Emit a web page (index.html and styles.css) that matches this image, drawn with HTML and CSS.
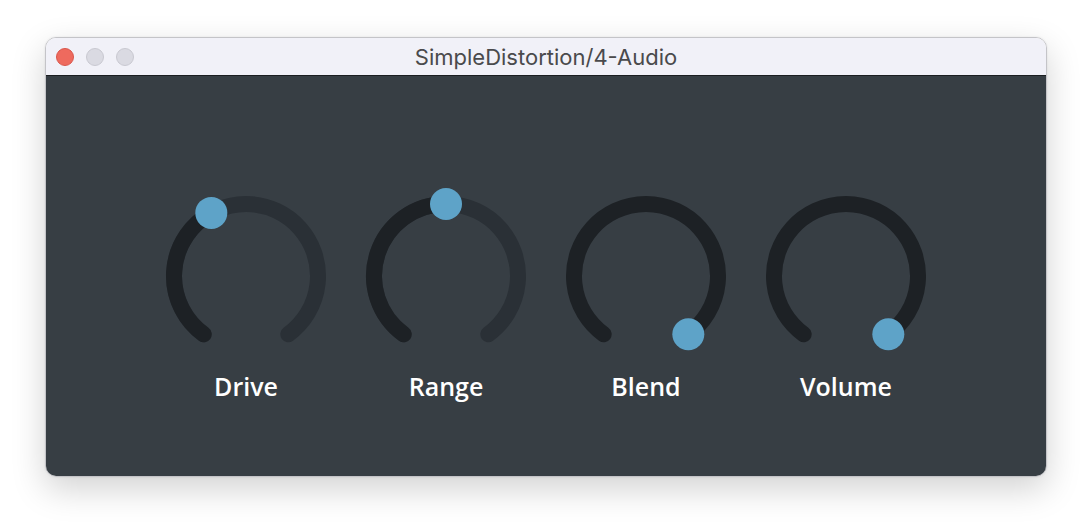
FILE: index.html
```html
<!DOCTYPE html>
<html>
<head>
<meta charset="utf-8">
<link rel="stylesheet" href="styles.css">
</head>
<body>
<div class="window">
  <div class="titlebar">
    <div class="lights">
      <span class="light close"></span>
      <span class="light"></span>
      <span class="light"></span>
    </div>
    <div class="title">SimpleDistortion/4-Audio</div>
  </div>
  <div class="content">
    <div class="knob">
      <svg class="dial" width="200" height="180" viewBox="0 0 200 180">
        <path class="track" d="M 57.68 158.25 A 72 72 0 1 1 142.32 158.25"/>
        <path class="value" d="M 57.68 158.25 A 72 72 0 0 1 65.31 36.91"/>
        <circle class="thumb" cx="65.31" cy="36.91" r="16"/>
      </svg>
      <div class="label">Drive</div>
    </div>
    <div class="knob">
      <svg class="dial" width="200" height="180" viewBox="0 0 200 180">
        <path class="track" d="M 57.68 158.25 A 72 72 0 1 1 142.32 158.25"/>
        <path class="value" d="M 57.68 158.25 A 72 72 0 0 1 100 28"/>
        <circle class="thumb" cx="100" cy="28" r="16"/>
      </svg>
      <div class="label">Range</div>
    </div>
    <div class="knob">
      <svg class="dial" width="200" height="180" viewBox="0 0 200 180">
        <path class="value" d="M 57.68 158.25 A 72 72 0 1 1 142.32 158.25"/>
        <circle class="thumb" cx="142.32" cy="158.25" r="16"/>
      </svg>
      <div class="label">Blend</div>
    </div>
    <div class="knob">
      <svg class="dial" width="200" height="180" viewBox="0 0 200 180">
        <path class="value" d="M 57.68 158.25 A 72 72 0 1 1 142.32 158.25"/>
        <circle class="thumb" cx="142.32" cy="158.25" r="16"/>
      </svg>
      <div class="label">Volume</div>
    </div>
  </div>
</div>
</body>
</html>
```

FILE: styles.css
```css
html, body {
  margin: 0;
  padding: 0;
  background: #ffffff;
}

body {
  padding: 37px 0 0 45px;
  height: 530px;
  box-sizing: border-box;
  overflow: hidden;
}

.window {
  width: 1000px;
  border: 1px solid #c4c4c8;
  border-radius: 11px;
  overflow: hidden;
  box-shadow: 0 12px 34px rgba(0, 0, 0, 0.18), 0 0 2px rgba(0, 0, 0, 0.1);
}

.titlebar {
  position: relative;
  height: 37px;
  background: #f1f1f8;
  border-bottom: 1px solid #1b1e21;
  display: flex;
  align-items: center;
  justify-content: center;
}

.lights {
  position: absolute;
  left: 10px;
  top: 10px;
  display: flex;
  gap: 12px;
}

.light {
  width: 18px;
  height: 18px;
  border-radius: 50%;
  background: #dadae2;
  box-sizing: border-box;
  border: 1px solid #c8c8d0;
}

.light.close {
  background: #ee6a5e;
  border-color: #d9564b;
}

.title {
  font-family: Inter, "Liberation Sans", sans-serif;
  font-size: 22px;
  color: #4a4a4c;
  margin-top: 1px;
}

.content {
  background: #373e44;
  height: 400px;
  box-sizing: border-box;
  padding: 100px 100px 0 100px;
  display: flex;
}

.knob {
  width: 200px;
  display: flex;
  flex-direction: column;
  align-items: center;
}

.dial {
  display: block;
}

.track, .value {
  fill: none;
  stroke-width: 16;
  stroke-linecap: round;
}

.track {
  stroke: #2a3036;
}

.value {
  stroke: #1d2125;
}

.thumb {
  fill: #5ea3c8;
}

.label {
  margin-top: 15px;
  font-family: "Open Sans", "DejaVu Sans", sans-serif;
  font-weight: 600;
  font-size: 25px;
  line-height: 31px;
  color: #ffffff;
}
```
